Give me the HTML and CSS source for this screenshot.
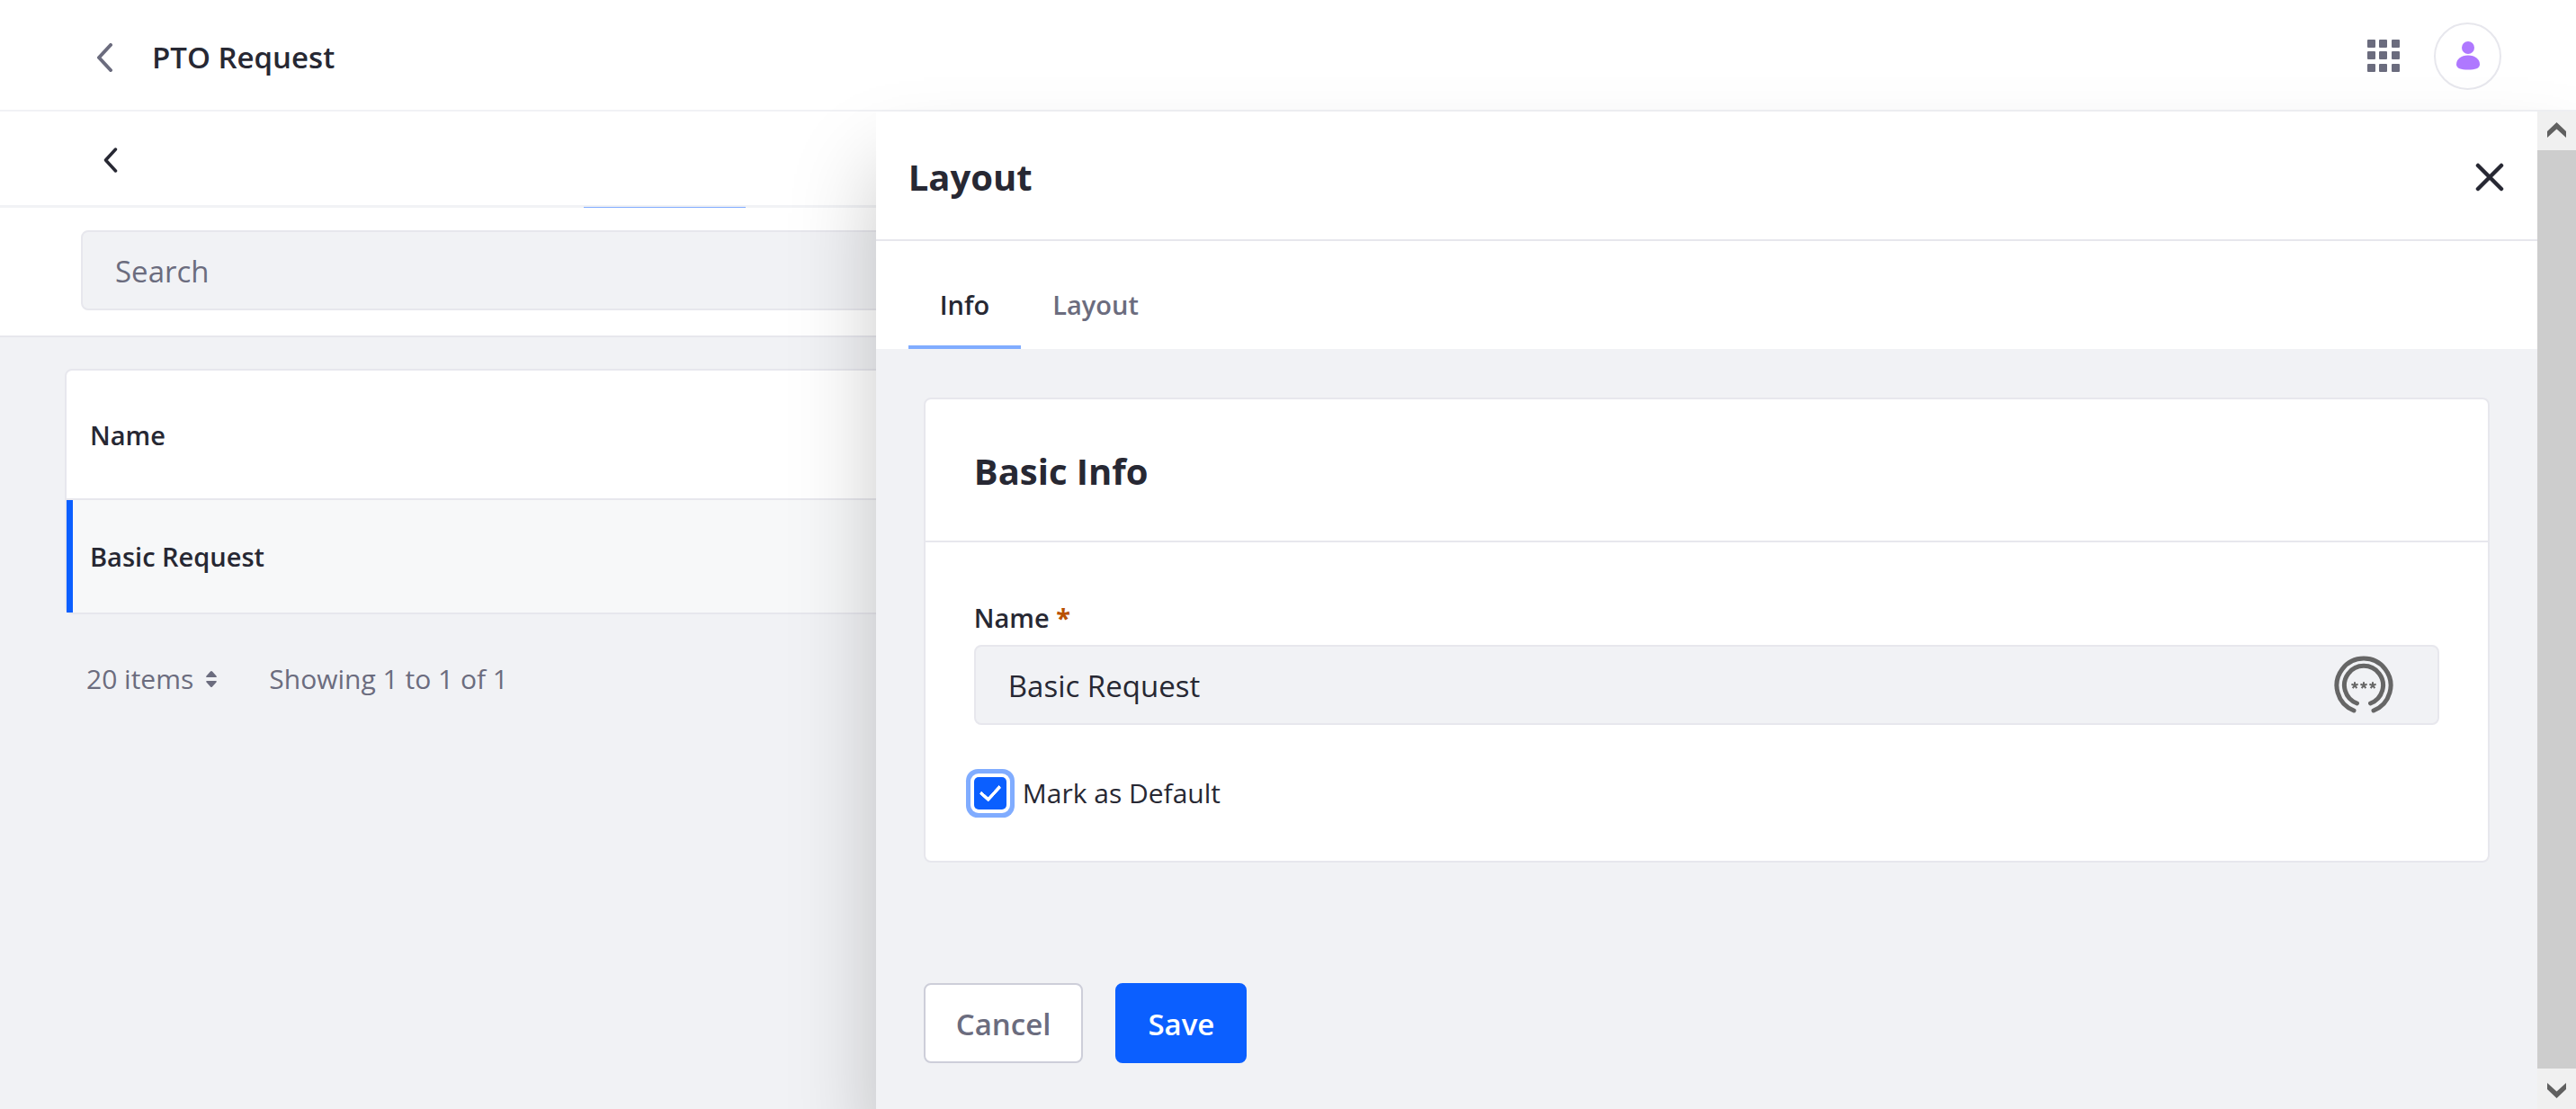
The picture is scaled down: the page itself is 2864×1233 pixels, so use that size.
FILE: index.html
```
<!DOCTYPE html>
<html lang="en">
<head>
<meta charset="utf-8">
<title>PTO Request</title>
<link rel="stylesheet" href="styles.css">
</head>
<body>
<header class="topbar">
  <a class="topbar-back" href="#" aria-label="Back">
    <svg width="20" height="32" viewBox="0 0 20 32"><path d="M16 2 3 16l13 14" fill="none" stroke="currentColor" stroke-width="4" stroke-linecap="round" stroke-linejoin="round"/></svg>
  </a>
  <h1 class="topbar-title">PTO Request</h1>
  <button class="icon-button apps" type="button" aria-label="Applications">
    <svg width="36" height="36" viewBox="0 0 36 36" fill="currentColor"><rect width="9" height="9" rx="1"/><rect x="13" width="9" height="9" rx="1"/><rect x="27" width="9" height="9" rx="1"/><rect y="13" width="9" height="9" rx="1"/><rect x="13" y="13" width="9" height="9" rx="1"/><rect x="27" y="13" width="9" height="9" rx="1"/><rect y="27" width="9" height="9" rx="1"/><rect x="13" y="27" width="9" height="9" rx="1"/><rect x="27" y="27" width="9" height="9" rx="1"/></svg>
  </button>
  <button class="icon-button avatar" type="button" aria-label="User">
    <svg width="28" height="32" viewBox="0 0 28 32" fill="currentColor"><circle cx="14" cy="7" r="7"/><path d="M14 15.500C22 15.500 27 20 27 25.500 27 30 22 31.500 14 31.500S1 30 1 25.500C1 20 6 15.500 14 15.500Z"/></svg>
  </button>
</header>

<div class="workspace">
  <main class="content">
    <nav class="subnav">
      <a class="subnav-back" href="#" aria-label="Back">
        <svg width="16" height="28" viewBox="0 0 16 28"><path d="M13.500 2 2.500 14l11 12" fill="none" stroke="currentColor" stroke-width="3.500" stroke-linecap="round" stroke-linejoin="round"/></svg>
      </a>
      <span class="subnav-active"></span>
    </nav>
    <form class="searchbar">
      <input class="field" type="search" placeholder="Search" aria-label="Search">
    </form>
    <section class="listing">
      <table class="views">
        <thead><tr><th scope="col">Name</th></tr></thead>
        <tbody><tr><td>Basic Request</td></tr></tbody>
      </table>
      <div class="pagination">
        <button class="page-size" type="button">20 items
          <svg width="12" height="18" viewBox="0 0 12 18" fill="currentColor"><path d="M6 0q.5 0 1 .5l4.500 5q.8 1.500-.5 1.500H1q-1.300 0-.5-1.500l4.500-5Q5.500 0 6 0ZM6 18q.5 0 1-.5l4.500-5q.8-1.500-.5-1.500H1q-1.300 0-.5 1.500l4.500 5q.5.5 1 .5Z"/></svg>
        </button>
        <span>Showing 1 to 1 of 1</span>
      </div>
    </section>
  </main>

  <aside class="drawer">
    <div class="drawer-main">
      <div class="drawer-header">
        <h2 class="heading">Layout</h2>
        <button class="icon-button close" type="button" aria-label="Close">
          <svg width="32" height="32" viewBox="0 0 32 32"><path d="M3 3l26 26M29 3 3 29" stroke="currentColor" stroke-width="4.500" stroke-linecap="round"/></svg>
        </button>
      </div>
      <nav class="tabs">
        <a class="tab tab-active" href="#">Info</a>
        <a class="tab" href="#">Layout</a>
      </nav>
      <form class="drawer-body">
        <section class="card">
          <div class="card-header"><h3 class="heading">Basic Info</h3></div>
          <div class="card-body">
            <label class="label" for="name">Name <span class="required">*</span></label>
            <div class="name-field">
              <input class="field" id="name" type="text" value="Basic Request">
              <svg class="manager" width="66" height="66" viewBox="0 0 66 66" fill="none" stroke="#666" stroke-width="5" stroke-linecap="round">
                <path d="M22 61A30 30 0 1 1 44 61M25.500 53A21.500 21.500 0 1 1 40.500 53"/>
                <path id="star" stroke-width="2" stroke-linecap="butt" d="M23 33v-3.800M23 33l-3.600-1.200M23 33l3.600-1.200M23 33l-2.300 3.200M23 33l2.300 3.200"/>
                <use href="#star" x="10"/><use href="#star" x="20"/>
              </svg>
            </div>
            <label class="check"><input type="checkbox" checked>Mark as Default</label>
          </div>
        </section>
        <div class="actions">
          <button class="button" type="button">Cancel</button>
          <button class="button button-primary" type="submit">Save</button>
        </div>
      </form>
    </div>
    <div class="scrollbar">
      <svg class="arrow" viewBox="0 0 21 17"><path d="M10.500 0 21 10v7L10.500 7.500 0 17v-7Z" fill="#606060"/></svg>
      <div class="thumb"></div>
      <svg class="arrow" viewBox="0 0 21 17"><path d="M10.500 17 21 7V0L10.500 9.500 0 0v7Z" fill="#606060"/></svg>
    </div>
  </aside>
</div>
</body>
</html>
```
FILE: styles.css
```
* { box-sizing: border-box; }

body {
  margin: 0;
  min-height: 100vh;
  display: flex;
  flex-direction: column;
  background: #f1f2f5;
  color: #272833;
  font: 30px/48px "Open Sans", "Noto Sans", sans-serif;
}

h1, h2, h3 { margin: 0; }
svg { display: block; flex: none; }
a { color: inherit; text-decoration: none; }
button, input { font: inherit; color: inherit; }

.icon-button {
  display: flex;
  align-items: center;
  justify-content: center;
  padding: 0;
  border: 0;
  background: none;
}

.topbar {
  display: flex;
  align-items: center;
  height: 124px;
  padding: 2px 83px 0 107px;
  background: #fff;
  border-bottom: 2px solid #f1f2f5;
}
.topbar-back { padding-top: 4px; color: #6b6c7e; }
.topbar-title {
  flex: 1;
  padding-top: 4px;
  margin-left: 42px;
  font-size: 33px;
  font-weight: 600;
}
.apps { color: #6b6c7e; }
.avatar {
  width: 75px;
  height: 75px;
  margin-left: 38px;
  border: 2px solid #e7e7ed;
  border-radius: 50%;
  background: #fff;
  color: #af78ff;
}

.workspace {
  position: relative;
  flex: 1;
  display: flex;
  flex-direction: column;
}

.subnav {
  display: flex;
  align-items: center;
  height: 107px;
  padding-left: 115px;
  background: #fff;
  border-bottom: 3px solid #f1f2f5;
}
.subnav-back { padding-top: 4px; }
.subnav-active {
  align-self: flex-end;
  width: 180px;
  height: 1px;
  margin: 0 0 -3px 518px;
  background: #80acff;
}

.searchbar {
  padding: 25px 90px 28px;
  background: #fff;
  border-bottom: 2px solid #e7e7ed;
}
.field {
  display: block;
  width: 100%;
  height: 89px;
  padding: 2px 36px 0;
  border: 2px solid #e7e7ed;
  border-radius: 8px;
  background: #f1f2f5;
  font-size: 33px;
  outline: 0;
  appearance: none;
}
.field::placeholder { color: #6b6c7e; opacity: 1; }

.listing { padding: 35px 72px; }
.views {
  width: 100%;
  border: 2px solid #e7e7ed;
  border-radius: 8px;
  border-spacing: 0;
  background: #fff;
  font-size: 29px;
  font-weight: 600;
  text-align: left;
}
.views th {
  height: 144px;
  padding: 2px 26px 0;
  border-bottom: 2px solid #e7e7ed;
  font-weight: 600;
}
.views td {
  height: 125px;
  padding: 0 19px;
  border-left: 7px solid #0b5fff;
  background: #f7f8f9;
}
.pagination {
  display: flex;
  gap: 58px;
  padding: 48px 24px;
  color: #6b6c7e;
}
.page-size {
  display: flex;
  align-items: center;
  gap: 14px;
  padding: 0;
  border: 0;
  background: none;
}

.drawer {
  position: absolute;
  inset: 0 0 0 34%;
  display: flex;
  background: #f1f2f5;
  box-shadow: 0 60px 90px rgba(0, 0, 0, .21);
}
.drawer-main { flex: 1; }
.drawer-header {
  display: flex;
  align-items: center;
  justify-content: space-between;
  height: 144px;
  padding: 4px 37px 0 36px;
  background: #fff;
  border-bottom: 2px solid #e7e7ed;
}
.heading {
  font-size: 40px;
  font-weight: 700;
}
.tabs {
  display: flex;
  height: 120px;
  padding: 0 36px;
  background: #fff;
}
.tab {
  padding: 47px 35px 0;
  color: #6b6c7e;
  font-size: 29px;
  font-weight: 600;
}
.tab-active {
  color: #272833;
  border-bottom: 4px solid #80acff;
}

.drawer-body { padding: 54px 53px; }
.card {
  border: 2px solid #e7e7ed;
  border-radius: 8px;
  background: #fff;
}
.card-header {
  display: flex;
  align-items: center;
  height: 159px;
  padding: 2px 54px 0;
  border-bottom: 2px solid #e7e7ed;
}
.card-body { padding: 60px 54px 51px; }
.label {
  display: block;
  margin-bottom: 6px;
  font-size: 29px;
  font-weight: 600;
}
.required { color: #b95000; font-weight: 700; }
.name-field {
  display: grid;
  align-items: center;
}
.name-field > * { grid-area: 1 / 1; }
.manager {
  justify-self: end;
  margin-right: 51px;
}
.check {
  display: flex;
  align-items: center;
  gap: 18px;
  margin-top: 52px;
}
.check input {
  appearance: none;
  width: 36px;
  height: 36px;
  margin: 0;
  border-radius: 5px;
  background: #0b5fff;
  box-shadow: 0 0 0 4px #fff, 0 0 0 9px #80acff;
  display: grid;
  place-items: center;
}
.check input::before {
  content: "";
  width: 10px;
  height: 18px;
  margin-top: -6px;
  border: solid #fff;
  border-width: 0 4px 4px 0;
  border-radius: 2px;
  rotate: 42deg;
}

.actions {
  display: flex;
  gap: 36px;
  margin-top: 134px;
}
.button {
  height: 89px;
  padding: 2px 34px 0;
  border: 2px solid #cdced9;
  border-radius: 8px;
  background: #fff;
  color: #6b6c7e;
  font-size: 33px;
  font-weight: 600;
}
.button-primary {
  border-color: #0b5fff;
  background: #0b5fff;
  color: #fff;
}

.scrollbar {
  display: flex;
  flex-direction: column;
  width: 43px;
  background: #f0f0f0;
}
.thumb {
  flex: 1;
  background: #cdcdcd;
}
.arrow {
  width: 21px;
  height: 17px;
  margin: 12px 11px 14px;
}
.thumb + .arrow { margin: 16px 11px 12px; }
```
